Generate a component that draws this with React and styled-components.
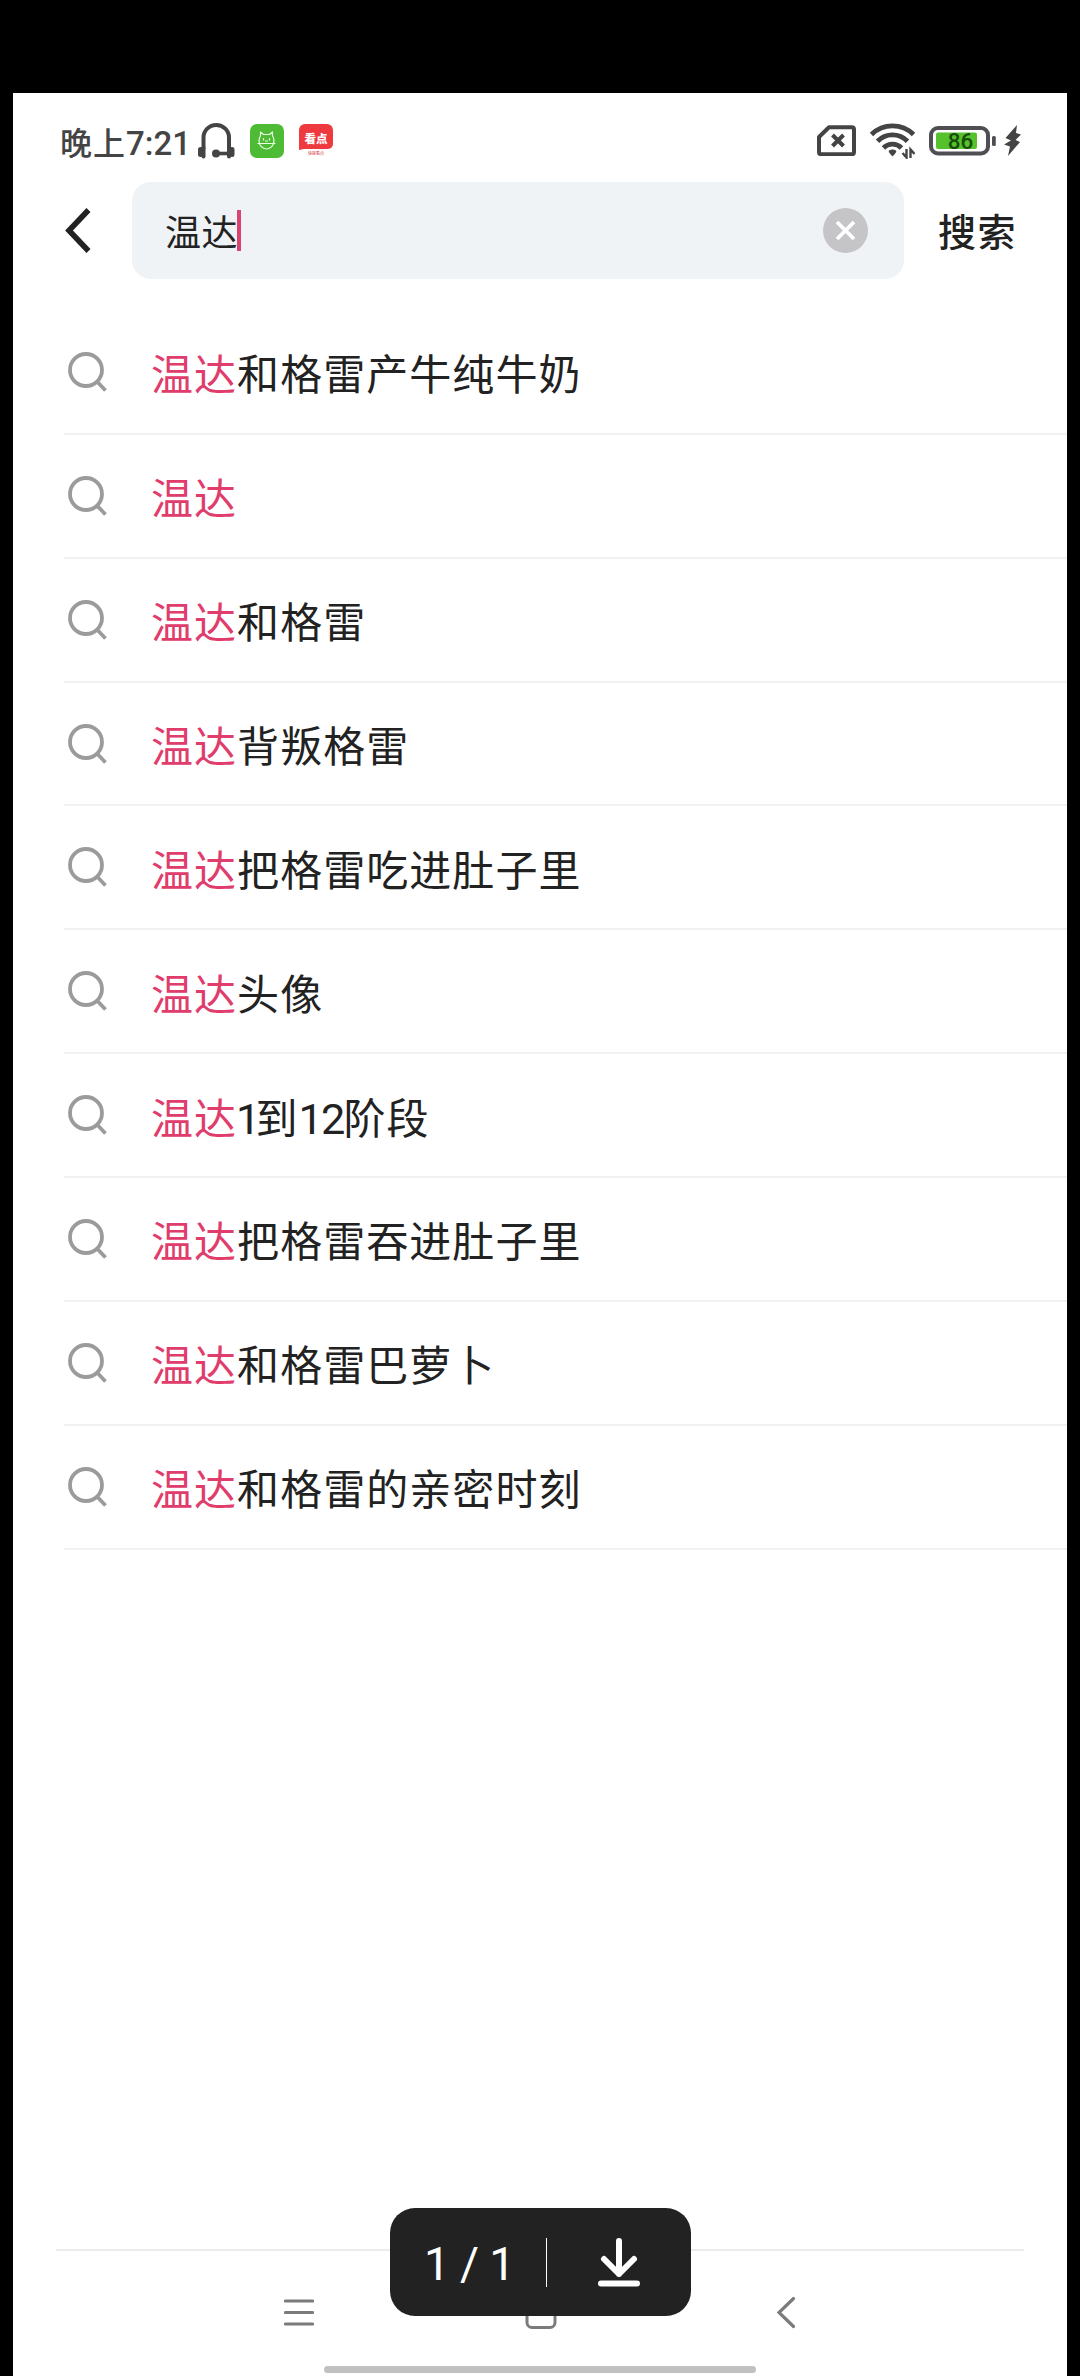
import styled, { createGlobalStyle } from "styled-components"

const GlobalStyle = createGlobalStyle`
    * {
        box-sizing : border-box;
    }
    body {
        margin : 0;
        background-color : #000;
        font-family : "Noto Sans CJK SC", sans-serif;
        color : #222;
    }
    svg {
        display : block;
        flex-shrink : 0;
    }
`;
const Viewer = styled.div`
    width : 1080px;
    height : 2376px;
    padding : 93px 13px 0px;
    background-color : #000;
    overflow : hidden;
    position : relative;
`;
const Screen = styled.div`
    width : 1054px;
    height : 2283px;
    background-color : #fff;
    display : flex;
    flex-direction : column;
`;
const StatusBar = styled.div`
    height : 89px;
    padding : 6px 46px 0px 47px;
    display : flex;
    align-items : center;
    justify-content : space-between;
    color : #444;
`;
const StatusGroup = styled.div`
    display : flex;
    align-items : center;
    gap : ${props=>props.$gap}px;
`;
const Time = styled.span`
    width : 122px;
    padding-top : 1px;
    font-size : 32px;
    line-height : 40px;
    font-weight : 500;
    letter-spacing : 1px;
    white-space : nowrap;
`;
const Digits = styled.span`
    font-family : Roboto, sans-serif;
    font-size : 1.03em;
    line-height : 1;
    margin-left : ${props=>props.$shift || 0}px;
    letter-spacing : ${props=>props.$spacing}px;
`;
const Power = styled.div`
    display : flex;
    align-items : center;
    gap : 7px;
`;
const SearchBar = styled.div`
    height : 97px;
    padding-left : 52px;
    display : flex;
    align-items : center;
`;
const SearchBox = styled.div`
    width : 772px;
    height : 97px;
    margin-left : 41px;
    padding : 0px 36px 0px 33px;
    display : flex;
    align-items : center;
    background-color : #eff3f6;
    border-radius : 19px;
`;
const Query = styled.span`
    padding-bottom : 2px;
    font-size : 36px;
    line-height : 54px;
    letter-spacing : 0.6px;
`;
const Caret = styled.span`
    width : 4px;
    height : 41px;
    margin-left : -1px;
    margin-right : auto;
    background-color : #d9436f;
`;
const SearchButton = styled.span`
    margin-left : 34px;
    padding-bottom : 1px;
    font-size : 38px;
    line-height : 56px;
    font-weight : 500;
    letter-spacing : 1.5px;
`;
const List = styled.ul`
    margin : 32px 0px 0px;
    padding : 0px 0px 0px 51px;
    list-style : none;
`;
const ListItem = styled.li`
    height : 123.86px;
    padding-left : 4px;
    display : flex;
    align-items : center;
    border-bottom : 2px solid #f1f1f1;
`;
const Suggestion = styled.span`
    margin-left : 44px;
    padding-top : 1px;
    font-size : 42px;
    line-height : 60px;
    letter-spacing : 1.05px;
    white-space : nowrap;
`;
const Match = styled.span`
    color : #e03c6c;
`;
const Bottom = styled.div`
    height : 127px;
    margin : auto 43px 0px;
    padding-top : 45px;
    border-top : 2px solid #ececec;
    display : flex;
    flex-direction : column;
    align-items : center;
    justify-content : space-between;
`;
const NavKeys = styled.div`
    width : 512px;
    height : 34px;
    display : flex;
    align-items : center;
    justify-content : space-between;
`;
const HomeIndicator = styled.div`
    width : 432px;
    height : 7px;
    margin-bottom : 3px;
    border-radius : 4px;
    background-color : #c1c1c1;
`;
const PagePill = styled.div`
    position : absolute;
    left : 390px;
    bottom : 60px;
    width : 301px;
    height : 108px;
    padding : 0px 51px 0px 33px;
    border-radius : 25px;
    background-color : #222;
    color : #fff;
    display : flex;
    align-items : center;
`;
const PageCount = styled.span`
    width : 123px;
    padding : 3px 0px 0px 1px;
    font-family : Roboto, sans-serif;
    font-size : 46px;
    line-height : 60px;
    letter-spacing : -0.6px;
    white-space : nowrap;
`;
const PillDivider = styled.span`
    width : 1px;
    height : 49px;
    margin-right : auto;
    background-color : #fff;
`;

const suggestions = [
    "和格雷产牛纯牛奶",
    "",
    "和格雷",
    "背叛格雷",
    "把格雷吃进肚子里",
    "头像",
    "1到12阶段",
    "把格雷吞进肚子里",
    "和格雷巴萝卜",
    "和格雷的亲密时刻",
];

const HeadphoneIcon = () => (
    <svg width="38" height="36" viewBox="0 0 38 36" fill="none" stroke="#444">
        <path d="M6.500 26V14.500a12.750 12.500 0 0 1 25.500 0V26" strokeWidth="4"/>
        <path d="M3.500 26.500v5M35 26.500v5" strokeWidth="5" strokeLinecap="round"/>
        <path d="M6.500 25v8.500M32 25v8.500" strokeWidth="4" strokeLinecap="round"/>
        <path d="M19 30.500h13" strokeWidth="3.600"/>
        <circle cx="19" cy="30.500" r="4" fill="#444" stroke="none"/>
    </svg>
)

const CatAppIcon = () => (
    <svg width="34" height="34" viewBox="0 0 34 34">
        <rect width="34" height="34" rx="7" fill="#4dbb33"/>
        <g fill="none" stroke="#e9ffe3" strokeWidth="1.200" strokeLinecap="round" strokeLinejoin="round">
            <path d="M10.500 12V8l3 2.500h6l3-2.500v4c1.200 1.500 1.500 3 1.500 5 0 4.500-3.500 8-7.500 8S9 21.500 9 17c0-2 .3-3.500 1.500-5z"/>
            <path d="M8 19.500h17M13.500 14.500v1.500M19.500 14.500v1.500M15.500 17h2"/>
        </g>
    </svg>
)

const NewsAppIcon = () => (
    <svg width="34" height="34" viewBox="0 0 34 34">
        <path d="M6 0h22a6 6 0 0 1 6 6v14a5 5 0 0 1-5 5H5l-5 1V6a6 6 0 0 1 6-6z" fill="#ee3a3f"/>
        <text x="17" y="18.500" textAnchor="middle" fontSize="11.500" fontWeight="900" fill="#fff">看点</text>
        <text x="17" y="30.500" textAnchor="middle" fontSize="4" fontWeight="500" fill="#d9595c">快报看点</text>
    </svg>
)

const SimIcon = () => (
    <svg width="39" height="31" viewBox="0 0 39 31" fill="none" stroke="#444" strokeWidth="4" strokeLinejoin="round">
        <path d="M12 2.200H35a2 2 0 0 1 2 2v23a2 2 0 0 1-2 2H4a2 2 0 0 1-2-2V12z"/>
        <path d="M15.500 10l11 11M26.500 10l-11 11"/>
    </svg>
)

const WifiIcon = () => (
    <svg width="45" height="36" viewBox="0 0 45 36" fill="none" stroke="#444" strokeWidth="4.800">
        <path d="M1.500 11.500a30 30 0 0 1 42 0"/>
        <path d="M7.500 18.200a21 21 0 0 1 30 0"/>
        <path d="M13.500 25a12.500 12.500 0 0 1 18 0"/>
        <path d="M19 27.500q3.500-2 7 0 1.500 1-3.500 6-5-5-3.500-6z" fill="#444" stroke="none"/>
        <path d="M36.500 26v8.500l-4-4.500M40.500 35v-8.500l4 4.500" strokeWidth="2.400"/>
    </svg>
)

const BatteryIcon = () => (
    <svg width="68" height="30" viewBox="0 0 68 30">
        <rect x="2" y="2" width="57" height="25.500" rx="7" fill="#fff" stroke="#504e52" strokeWidth="4"/>
        <rect x="7" y="6.500" width="41" height="16.500" rx="2" fill="#55c22b"/>
        <rect x="63" y="10" width="3.800" height="10" rx="1.500" fill="#504e52"/>
        <text x="31.500" y="23" textAnchor="middle" fontFamily="Roboto, sans-serif" fontSize="22.500" fontWeight="500" fill="#194d0c">86</text>
    </svg>
)

const BoltIcon = () => (
    <svg width="17" height="31" viewBox="0 0 17 31" fill="#444">
        <path d="M13 0L1.500 13l5.500 2.500L0 19.500l6 2L4 31l12-14-4.500-2L17 9.500 12 8z"/>
    </svg>
)

const BackIcon = () => (
    <svg width="26" height="46" viewBox="0 0 26 46" fill="none" stroke="#222" strokeWidth="5.600">
        <path d="M23.500 2L4 22.500l19.500 20.500"/>
    </svg>
)

const ClearIcon = () => (
    <svg width="45" height="45" viewBox="0 0 45 45">
        <circle cx="22.500" cy="22.500" r="22.500" fill="#c5c5c7"/>
        <path d="M14 14l17 17M31 14L14 31" stroke="#fff" strokeWidth="3.800"/>
    </svg>
)

const SearchIcon = () => (
    <svg width="39" height="40" viewBox="0 0 39 40" fill="none" stroke="#9b9b9b" strokeWidth="3.800">
        <circle cx="18" cy="18" r="16"/>
        <path d="M29 29.500l8.500 9"/>
    </svg>
)

const MenuKey = () => (
    <svg width="30" height="28" viewBox="0 0 30 28" stroke="#7b7b7b" strokeWidth="3.200" strokeLinecap="round">
        <path d="M1.500 2h27M1.500 13.500h27M1.500 25h27"/>
    </svg>
)

const HomeKey = () => (
    <svg width="42" height="32" viewBox="0 0 42 32" fill="none" stroke="#7b7b7b" strokeWidth="3">
        <rect x="2" y="1.500" width="28" height="29" rx="5"/>
    </svg>
)

const BackKey = () => (
    <svg width="19" height="32" viewBox="0 0 19 32" fill="none" stroke="#7b7b7b" strokeWidth="3.200" strokeLinecap="round">
        <path d="M16.500 1.500L2 15.500l14.500 14"/>
    </svg>
)

const DownloadIcon = () => (
    <svg width="42" height="49" viewBox="0 0 42 49" fill="none" stroke="#fff" strokeWidth="6" strokeLinecap="round" strokeLinejoin="round">
        <path d="M21 3v33M6 21l15 15 15-15M3 45.500h36"/>
    </svg>
)

// a lone digit sits tighter between the characters than a pair
const renderText = (text) =>
    text.split(/(\d+)/).map((part, i) =>
        /\d/.test(part)
            ? <Digits key={i} $shift={part.length > 1 ? 0 : -1} $spacing={part.length > 1 ? -1.8 : -5}>{part}</Digits>
            : part
    )

const App = () => {
    return (
        <Viewer>
            <GlobalStyle/>
            <Screen>
                <StatusBar>
                    <StatusGroup $gap={15}>
                        <StatusGroup $gap={15}>
                            <Time>晚上<Digits $spacing={0}>7:21</Digits></Time>
                            <HeadphoneIcon/>
                        </StatusGroup>
                        <CatAppIcon/>
                        <NewsAppIcon/>
                    </StatusGroup>
                    <StatusGroup $gap={14}>
                        <SimIcon/>
                        <WifiIcon/>
                        <Power>
                            <BatteryIcon/>
                            <BoltIcon/>
                        </Power>
                    </StatusGroup>
                </StatusBar>
                <SearchBar>
                    <BackIcon/>
                    <SearchBox>
                        <Query>温达</Query>
                        <Caret/>
                        <ClearIcon/>
                    </SearchBox>
                    <SearchButton>搜索</SearchButton>
                </SearchBar>
                <List>
                    {suggestions.map((text) => (
                        <ListItem key={text}>
                            <SearchIcon/>
                            <Suggestion><Match>温达</Match>{renderText(text)}</Suggestion>
                        </ListItem>
                    ))}
                </List>
                <Bottom>
                    <NavKeys>
                        <MenuKey/>
                        <HomeKey/>
                        <BackKey/>
                    </NavKeys>
                    <HomeIndicator/>
                </Bottom>
            </Screen>
            <PagePill>
                <PageCount>1 / 1</PageCount>
                <PillDivider/>
                <DownloadIcon/>
            </PagePill>
        </Viewer>
    )
}

export default App
